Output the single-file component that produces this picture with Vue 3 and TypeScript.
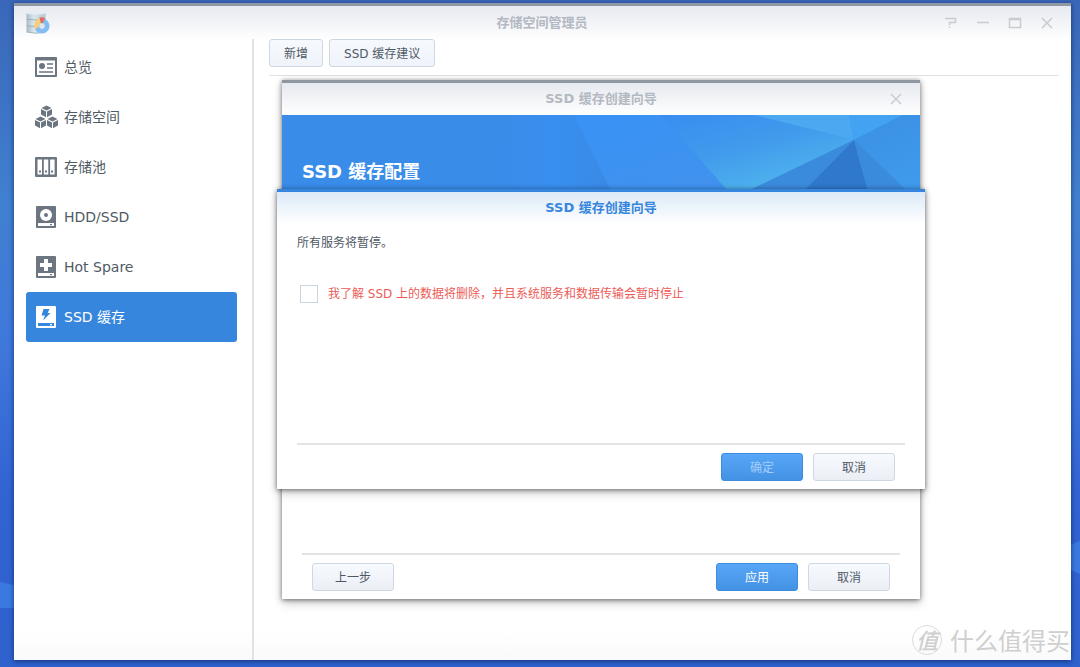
<script setup lang="ts">
import { ref } from 'vue'

type IconName = 'overview' | 'volume' | 'pool' | 'disk' | 'spare' | 'cache'

interface NavItem {
  icon: IconName
  label: string
}

const navItems: NavItem[] = [
  { icon: 'overview', label: '总览' },
  { icon: 'volume', label: '存储空间' },
  { icon: 'pool', label: '存储池' },
  { icon: 'disk', label: 'HDD/SSD' },
  { icon: 'spare', label: 'Hot Spare' },
  { icon: 'cache', label: 'SSD 缓存' },
]

const active = ref<IconName>('cache')
const agreed = ref(false)
</script>

<template>
  <div class="desktop">
    <svg class="wallpaper" viewBox="0 0 1080 667" preserveAspectRatio="none" aria-hidden="true">
      <path d="M0 582 L14 585 L14 608 L0 608Z" fill="#3a7ae0" />
      <path d="M1080 541 L1071 545 L1071 570 L1080 574Z" fill="#3a7ae0" />
    </svg>

    <section class="window">
      <header class="titlebar">
        <svg class="app-icon" width="24" height="24" viewBox="0 0 24 24" aria-hidden="true">
          <defs>
            <linearGradient id="cylinder" x1="0" x2="1">
              <stop offset="0" stop-color="#a9bac7" />
              <stop offset="0.4" stop-color="#dce7ee" />
              <stop offset="1" stop-color="#b3c5d2" />
            </linearGradient>
          </defs>
          <path d="M0.5 2H19.5V21Q10 23.5 0.5 21Z" fill="url(#cylinder)" />
          <ellipse cx="10" cy="2.2" rx="9.5" ry="1.4" fill="#e3edf3" />
          <path d="M0.5 8.2Q10 9.8 19.5 8.2M0.5 14.800Q10 16.400 19.500 14.800" fill="none" stroke="#98abb9" stroke-width="0.9" />
          <path d="M0.5 21Q10 23.5 19.5 21" fill="none" stroke="#98abb9" stroke-width="0.8" />
          <circle cx="16" cy="15" r="5.2" fill="none" stroke="#83bdf3" stroke-width="4.800" />
          <path d="M8 15Q8.500 9 14 6.600L15.200 12Q13 13 12.500 16L9.500 18Q8 17 8 15Z" fill="#f5cf78" />
          <path d="M13.500 6.600Q16 5.800 19 7L16.800 12L14.800 12Z" fill="#e46a68" />
          <circle cx="16" cy="15" r="2.700" fill="#dce6ed" />
        </svg>
        <h1>存储空间管理员</h1>
        <div class="window-tools">
          <button type="button" aria-label="帮助">
            <svg width="14" height="12" viewBox="0 0 14 12"><path d="M1 1.500H11.500V5.500H5.500V8M5.500 9.500V11" /></svg>
          </button>
          <button type="button" aria-label="最小化">
            <svg width="14" height="12" viewBox="0 0 14 12"><path d="M1 5.500H13" /></svg>
          </button>
          <button type="button" aria-label="最大化">
            <svg width="14" height="12" viewBox="0 0 14 12"><path d="M1.500 1.500H12.500V10.500H1.500ZM1 2.500H13" /></svg>
          </button>
          <button type="button" aria-label="关闭">
            <svg width="14" height="12" viewBox="0 0 14 12"><path d="M2 1L12 11M12 1L2 11" /></svg>
          </button>
        </div>
      </header>

      <div class="columns">
        <nav class="sidebar">
          <button
            v-for="item in navItems"
            :key="item.icon"
            type="button"
            class="nav-item"
            :class="{ selected: item.icon === active }"
            @click="active = item.icon"
          >
            <svg width="24" height="24" viewBox="0 0 24 24" aria-hidden="true">
              <template v-if="item.icon === 'overview'">
                <rect x="1" y="2" width="22" height="20" rx="1" fill="currentColor" />
                <rect class="cut" x="3" y="5.5" width="18" height="14.5" />
                <circle cx="8" cy="11" r="3" fill="currentColor" />
                <path d="M13 9H19M13 13H19M5 17H19" stroke="currentColor" stroke-width="1.6" />
              </template>
              <template v-else-if="item.icon === 'volume'">
                <g
                  v-for="spot in [[12.5, 0.5], [6.5, 11.5], [18.5, 11.5]]"
                  :key="spot[0]"
                  :transform="`translate(${spot[0]} ${spot[1]})`"
                  fill="currentColor"
                >
                  <path d="M0 0L5 2.4L0 5L-5 2.4Z" />
                  <path d="M-5.5 3.4L-0.5 6V11.8L-5.5 9Z" />
                  <path d="M5.5 3.4L0.5 6V11.8L5.5 9Z" />
                </g>
              </template>
              <template v-else-if="item.icon === 'pool'">
                <rect x="1" y="2" width="22" height="20" rx="1" fill="currentColor" />
                <path class="cut" d="M3.5 4.5H8V19.5H3.5ZM9.8 4.5H14.3V19.5H9.8ZM16.1 4.5H20.6V19.5H16.1Z" />
                <path d="M5 15.5H7V17.5H5ZM11 15.5H13V17.5H11ZM17 15.5H19V17.5H17Z" fill="currentColor" />
              </template>
              <template v-else>
                <rect x="2" y="1" width="20" height="22" rx="1" fill="currentColor" />
                <path class="cut" d="M4 18H20V21H4Z" />
                <path d="M16 19H18V20.2H16Z" fill="currentColor" />
                <template v-if="item.icon === 'disk'">
                  <circle class="cut" cx="12" cy="10" r="6" />
                  <circle cx="12" cy="10" r="2" fill="currentColor" />
                </template>
                <path v-else-if="item.icon === 'spare'" class="cut" d="M10 4H14V8H18V12H14V16H10V12H6V8H10Z" />
                <path v-else class="cut" d="M9.5 4H15.5L13.7 8H16.5L9 15.5L11 10.5H7.5Z" />
              </template>
            </svg>
            <span>{{ item.label }}</span>
          </button>
        </nav>

        <main class="content">
          <div class="toolbar">
            <button type="button" class="btn">新增</button>
            <button type="button" class="btn">SSD 缓存建议</button>
          </div>
        </main>
      </div>

      <section class="dialog wizard" role="dialog" aria-labelledby="wizard-title">
        <header class="dialog-title">
          <h2 id="wizard-title">SSD 缓存创建向导</h2>
          <button type="button" class="close" aria-label="关闭">
            <svg width="14" height="12" viewBox="0 0 14 12"><path d="M2 1L12 11M12 1L2 11" /></svg>
          </button>
        </header>
        <div class="banner">
          <svg viewBox="0 0 638 76" preserveAspectRatio="none" aria-hidden="true">
            <defs>
              <linearGradient id="left-facet"><stop offset="0" stop-color="#3a8ce9" /><stop offset="0.5" stop-color="#398fef" /><stop offset="1" stop-color="#3989e4" /></linearGradient>
              <linearGradient id="mid-facet" x1="0" x2="0.6" y1="0" y2="1"><stop offset="0" stop-color="#3892f5" /><stop offset="1" stop-color="#4092ee" /></linearGradient>
              <linearGradient id="bright-facet" x1="0" x2="0.7" y1="0" y2="1"><stop offset="0" stop-color="#398df0" /><stop offset="0.5" stop-color="#429bec" /><stop offset="1" stop-color="#51b9ed" /></linearGradient>
              <linearGradient id="right-facet" x2="1" y2="1"><stop offset="0" stop-color="#398be0" /><stop offset="1" stop-color="#409bed" /></linearGradient>
            </defs>
            <path d="M0 0H638V76H0Z" fill="#3a8ce9" />
            <path d="M230 0H292L329 76H220Z" fill="url(#left-facet)" />
            <path d="M292 0H378L446 76H329Z" fill="url(#mid-facet)" />
            <path d="M378 0H472L572 25L468 76H446Z" fill="url(#bright-facet)" />
            <path d="M472 0H567L572 25Z" fill="#4ba8f1" />
            <path d="M567 0H621L572 25Z" fill="#43a3f2" />
            <path d="M621 0H638V76H466L572 25Z" fill="url(#right-facet)" />
            <path d="M572 25L524 76H466Z" fill="#3b8bdc" />
            <path d="M572 25L586 76H522Z" fill="#3078cb" />
            <path d="M572 25L625 76H586Z" fill="#3b8bdc" />
          </svg>
          <h3>SSD 缓存配置</h3>
        </div>
        <footer class="dialog-footer">
          <button type="button" class="btn wide back">上一步</button>
          <button type="button" class="btn wide primary">应用</button>
          <button type="button" class="btn wide">取消</button>
        </footer>

        <section class="dialog confirm" role="dialog" aria-labelledby="confirm-title">
          <header class="dialog-title">
            <h2 id="confirm-title">SSD 缓存创建向导</h2>
          </header>
          <div class="confirm-body">
            <p>所有服务将暂停。</p>
            <label class="agree">
              <input v-model="agreed" type="checkbox" />
              <span>我了解 SSD 上的数据将删除，并且系统服务和数据传输会暂时停止</span>
            </label>
          </div>
          <footer class="dialog-footer">
            <button type="button" class="btn wide primary" :disabled="!agreed">确定</button>
            <button type="button" class="btn wide">取消</button>
          </footer>
        </section>
      </section>
    </section>

    <div class="watermark">
      <span class="seal">值</span>
      <span>什么值得买</span>
    </div>
  </div>
</template>

<style>
body {
  margin: 0;
}
</style>

<style scoped>
* {
  box-sizing: border-box;
}

.desktop {
  position: relative;
  display: flex;
  min-height: 100vh;
  padding: 3px 9px 7px 14px;
  overflow: hidden;
  background: linear-gradient(#3a67b9, #4180d0 30%, #4079dc 50%, #3163d2 75%, #2f62cd);
  color: #4f5965;
  font-family: "DejaVu Sans", "Noto Sans CJK SC", sans-serif;
  font-size: 12px;
  line-height: 20px;
}

.wallpaper {
  position: absolute;
  inset: 0;
  width: 100%;
  height: 100%;
}

button {
  font: inherit;
  color: inherit;
  cursor: pointer;
}

h1,
h2,
h3,
p {
  margin: 0;
}

.window {
  position: relative;
  display: flex;
  flex: 1;
  flex-direction: column;
  border-top: 3px solid #9198a3;
  background: linear-gradient(#e6e9ef, #fff 34px, #fff calc(100% - 30px), #fafafa);
  box-shadow: 0 1px 5px rgba(0, 15, 60, 0.6);
}

.titlebar {
  display: flex;
  align-items: center;
  height: 33px;
  padding: 0 17px 0 12px;
}

.titlebar h1 {
  flex: 1;
  padding-left: 90px;
  color: #b3b9c2;
  font-size: 13px;
  text-align: center;
}

.window-tools {
  display: flex;
  gap: 18px;
}

.window-tools button,
.close {
  display: flex;
  padding: 0;
  border: 0;
  background: none;
}

.window-tools path,
.close path {
  fill: none;
  stroke: #c8ccd1;
  stroke-width: 1.5;
}

.columns {
  display: flex;
  flex: 1;
}

.sidebar {
  display: flex;
  flex: 0 0 240px;
  flex-direction: column;
  padding: 3px 15px 3px 12px;
  border-right: 2px solid #e1e2e4;
}

.nav-item {
  display: flex;
  align-items: center;
  gap: 6px;
  height: 50px;
  padding: 0 8px;
  border: 0;
  border-radius: 3px;
  background: none;
  color: #505a64;
  font-size: 14px;
  text-align: left;
}

.nav-item svg {
  color: #6c7681;
}

.nav-item.selected,
.nav-item.selected svg {
  color: #fff;
}

.nav-item.selected {
  background: #3786dd;
}

.cut {
  fill: #fff;
}

.selected .cut {
  fill: #3786dd;
}

.content {
  flex: 1;
  padding: 0 12px 0 15px;
}

.toolbar {
  display: flex;
  gap: 6px;
  padding-bottom: 8px;
  border-bottom: 1px solid #dde2e9;
}

.btn {
  height: 28px;
  padding: 2px 14px 0;
  border: 1px solid #cfd7e1;
  border-radius: 3px;
  background: linear-gradient(#f7faff, #ebeff5);
  line-height: 20px;
}

.toolbar .btn {
  background: linear-gradient(#f6f9fe, #eff4fa);
}

.wide {
  width: 82px;
}

.primary {
  border-color: #3c8ce0;
  background: linear-gradient(#57a6f8, #4392e4);
  color: #fff;
}

.primary:disabled {
  color: #a5cef8;
}

.dialog {
  position: absolute;
  display: flex;
  flex-direction: column;
  border-top: 3px solid #8e969f;
  background: #fff;
  box-shadow: 0 1px 5px rgba(0, 0, 0, 0.55), 0 5px 10px rgba(0, 0, 0, 0.15);
}

.wizard {
  top: 74px;
  right: 151px;
  bottom: 61px;
  left: 268px;
}

.dialog-title {
  position: relative;
  display: flex;
  align-items: center;
  justify-content: center;
  height: 32px;
  background: linear-gradient(#e6e9ef, #fff);
}

.dialog-title h2 {
  color: #b3b9c2;
  font-size: 13px;
}

.close {
  position: absolute;
  right: 17px;
}

.banner {
  position: relative;
  display: flex;
  align-items: flex-end;
  height: 76px;
  padding: 0 20px 7px;
}

.banner svg {
  position: absolute;
  inset: 0;
  width: 100%;
  height: 100%;
}

.banner h3 {
  position: relative;
  color: #fff;
  font-size: 18px;
  line-height: 24px;
}

.dialog-footer {
  display: flex;
  justify-content: flex-end;
  gap: 10px;
  margin: auto 20px 0;
  padding: 8px 10px;
  border-top: 2px solid #e2e4e4;
}

.back {
  margin-right: auto;
}

.confirm {
  top: 106px;
  right: -5px;
  left: -5px;
  height: 300px;
  border-top-color: #3786dd;
}

.confirm .dialog-title {
  background: linear-gradient(#dceaf8, #fff);
}

.confirm .dialog-title h2 {
  color: #3786dd;
}

.confirm-body {
  display: flex;
  flex-direction: column;
  gap: 31px;
  padding: 9px 20px;
}

.agree {
  display: flex;
  align-items: center;
  gap: 10px;
  padding-left: 3px;
  color: #eb5c58;
}

.agree input {
  width: 18px;
  height: 18px;
  margin: 0;
  border: 1px solid #cbd5e0;
  background: #fff;
  appearance: none;
}

.agree input:checked {
  background: #3786dd;
}

.watermark {
  position: absolute;
  right: 10px;
  bottom: 11px;
  display: flex;
  align-items: center;
  gap: 8px;
  color: #cfcfcf;
  font-family: "Noto Sans CJK SC", sans-serif;
  font-size: 24px;
  line-height: 32px;
}

.seal {
  width: 30px;
  height: 30px;
  border: 1px solid #dcdcdc;
  border-radius: 50%;
  font-size: 22px;
  font-style: italic;
  font-weight: 500;
  line-height: 27px;
  text-align: center;
}
</style>
